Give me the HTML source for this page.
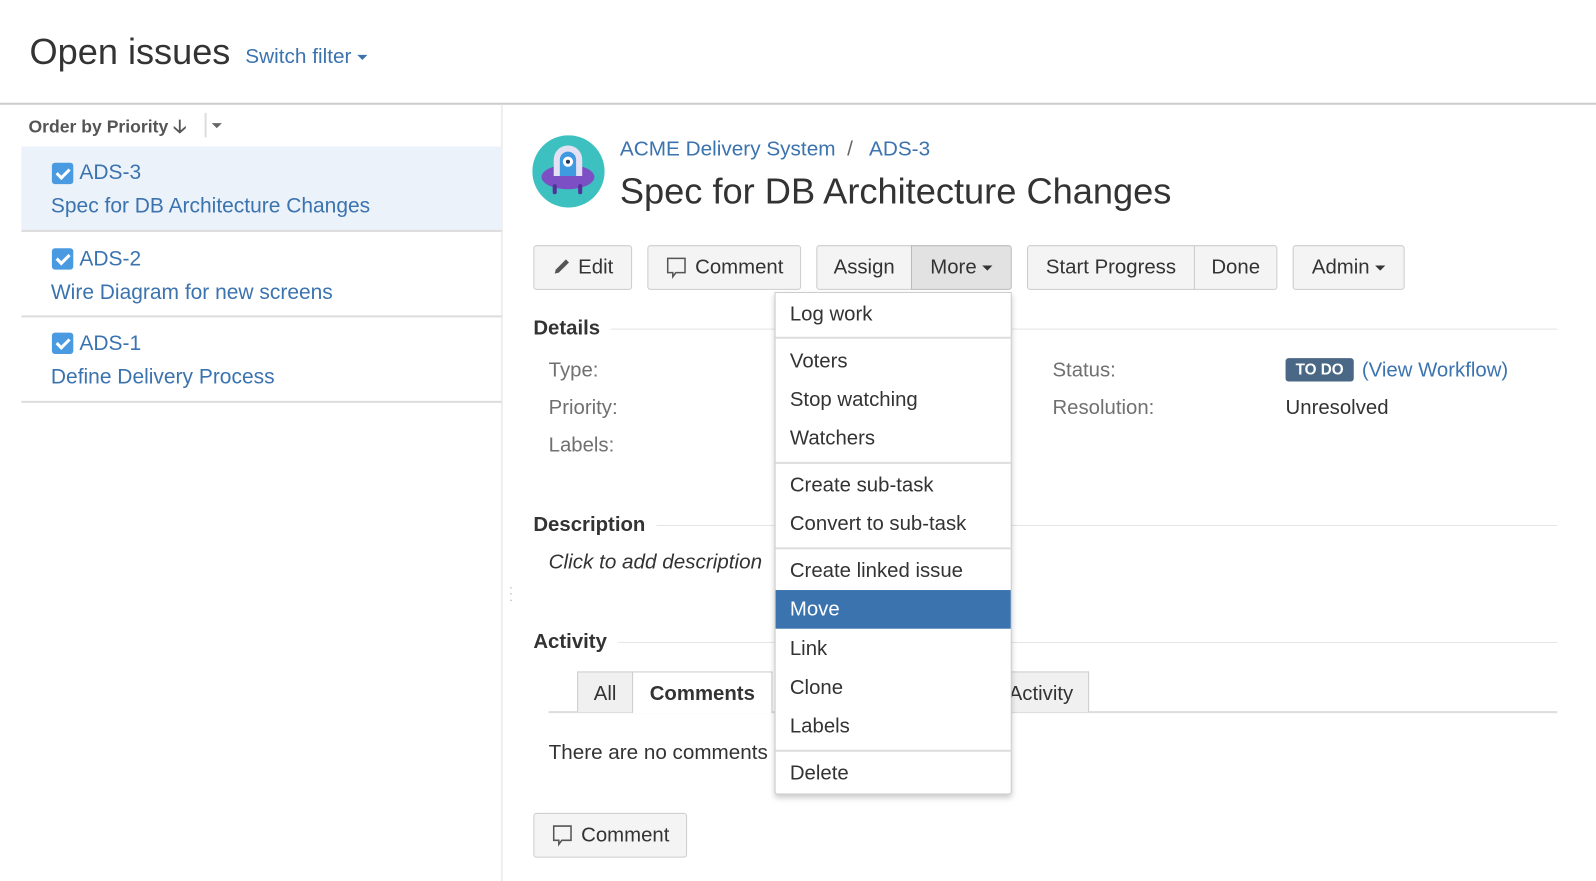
<!DOCTYPE html>
<html><head><meta charset="utf-8"><style>
*{box-sizing:border-box;margin:0;padding:0}
html,body{width:1596px;height:881px;overflow:hidden;background:#fff}
#w{width:1568px;height:866px;position:relative;transform:scale(1.01786,1.01732);transform-origin:0 0;font-family:"Liberation Sans",Arial,sans-serif;color:#333;font-size:20px}
.a{position:absolute;white-space:nowrap}
.blue{color:#3b73af}
.btn{position:absolute;top:241px;height:44px;border:1px solid #ccc;background:#f4f4f4;border-radius:3px;line-height:42px;text-align:center;font-size:20px;color:#333}
.lbl{color:#707070}
.item{position:absolute;left:21px;width:472px;height:84px;border-bottom:2px solid #ddd}
.item .a{font-size:20.6px}
.cb{position:absolute;left:30px;width:21px;height:21px;background:#4a9ae1;border-radius:3px}
.cb:after{content:"";position:absolute;left:7px;top:3px;width:5px;height:10px;border:solid #fff;border-width:0 3px 3px 0;transform:rotate(45deg)}
.dd{position:absolute;left:761px;top:287px;width:233px;height:494px;background:#fff;border:1px solid #ccc;border-radius:0 0 3px 3px;box-shadow:0 3px 6px rgba(0,0,0,.2)}
.di{position:absolute;left:0;width:231px;height:38px;line-height:38px;padding-left:14px;color:#333}
.sep{position:absolute;left:0;width:231px;height:2px;background:#ddd}
h3{position:absolute;font-size:20px;font-weight:bold;color:#333}
.hl{position:absolute;height:1px;background:#e5e5e5}
</style></head><body><div id="w">
<div class="a" style="left:29px;top:31px;font-size:35.5px;color:#333">Open issues</div>
<div class="a blue" style="left:241px;top:45px;font-size:20.4px">Switch filter <span style="display:inline-block;border:5px solid transparent;border-top-color:#3b73af;vertical-align:middle;margin-top:4px"></span></div>
<div style="position:absolute;left:0;top:101px;width:1568px;height:2px;background:#ccc"></div>
<div style="position:absolute;left:492px;top:103px;width:2px;height:763px;background:#eee"></div>
<div class="a" style="left:28px;top:112px;font-size:17.3px;font-weight:bold;color:#555">Order by Priority <span style="font-size:18px">&#129123;</span></div>
<div style="position:absolute;left:201px;top:111px;width:2px;height:24px;background:#ddd"></div>
<div style="position:absolute;left:208px;top:121px;border:5px solid transparent;border-top-color:#666"></div>
<div class="item" style="top:144px;background:#ebf2f9"><div class="cb" style="top:16px"></div><div class="a blue" style="left:57px;top:14px">ADS-3</div><div class="a blue" style="left:29px;top:47px">Spec for DB Architecture Changes</div></div>
<div class="item" style="top:228px"><div class="cb" style="top:16px"></div><div class="a blue" style="left:57px;top:15px">ADS-2</div><div class="a blue" style="left:29px;top:48px">Wire Diagram for new screens</div></div>
<div class="item" style="top:312px"><div class="cb" style="top:15px"></div><div class="a blue" style="left:57px;top:14px">ADS-1</div><div class="a blue" style="left:29px;top:47px">Define Delivery Process</div></div>
<div class="a" style="left:500px;top:574px;color:#aaa;font-size:12px;line-height:6px">·<br>·<br>·</div>
<svg class="a" style="left:523px;top:133px" width="71" height="71" viewBox="0 0 71 71"><circle cx="35.5" cy="35.5" r="35.5" fill="#3dc0c0"/><ellipse cx="35" cy="41" rx="26" ry="12" fill="#7d4fc4"/><rect x="20" y="48" width="4" height="10" rx="2" fill="#55309a"/><rect x="45" y="48" width="4" height="10" rx="2" fill="#55309a"/><path d="M21 40 V24 a14 14 0 0 1 28 0 V40 Z" fill="#e4e0f3"/><path d="M27 40 V24 a8 8 0 0 1 16 0 V40 Z" fill="#3f9ae0"/><circle cx="35" cy="26" r="5" fill="#fff"/><circle cx="35" cy="26" r="2" fill="#253858"/></svg>
<div class="a blue" style="left:609px;top:136px;font-size:20.4px">ACME Delivery System <span style="color:#666">&nbsp;/&nbsp;&nbsp;</span> ADS-3</div>
<div class="a" style="left:609px;top:168px;font-size:35.6px;color:#333">Spec for DB Architecture Changes</div>
<div class="btn" style="left:524px;width:97px"><svg width="20" height="20" viewBox="0 0 20 20" style="vertical-align:-3px"><path d="M3 17 L4 13 L14 3 L17 6 L7 16 Z" fill="#555"/></svg> Edit</div>
<div class="btn" style="left:636px;width:151px"><svg width="24" height="24" viewBox="0 0 24 24" style="vertical-align:-6px"><path d="M3 3 H20 V17 H11 L8 21 V17 H3 Z" fill="none" stroke="#555" stroke-width="1.5"/></svg> Comment</div>
<div class="btn" style="left:802px;width:94px;border-radius:3px 0 0 3px">Assign</div>
<div class="btn" style="left:895px;width:99px;background:#e2e2e2;border-color:#bbb;border-radius:0 3px 3px 0">More <span style="display:inline-block;border:5px solid transparent;border-top-color:#333;vertical-align:middle;margin-top:4px"></span></div>
<div class="btn" style="left:1009px;width:165px;border-radius:3px 0 0 3px">Start Progress</div>
<div class="btn" style="left:1173px;width:82px;border-radius:0 3px 3px 0">Done</div>
<div class="btn" style="left:1270px;width:110px">Admin <span style="display:inline-block;border:5px solid transparent;border-top-color:#333;vertical-align:middle;margin-top:4px"></span></div>
<h3 style="left:524px;top:312px">Details</h3><div class="hl" style="left:600px;top:323px;width:930px"></div>
<div class="a lbl" style="left:539px;top:353px">Type:</div>
<div class="a lbl" style="left:539px;top:390px">Priority:</div>
<div class="a lbl" style="left:539px;top:427px">Labels:</div>
<div class="a lbl" style="left:1034px;top:353px">Status:</div>
<div class="a lbl" style="left:1034px;top:390px">Resolution:</div>
<div class="a" style="left:1263px;top:352px;width:67px;height:23px;background:#4a6785;border-radius:3px;color:#fff;font-size:15px;font-weight:bold;text-align:center;line-height:23px">TO DO</div>
<div class="a blue" style="left:1338px;top:353px">(View Workflow)</div>
<div class="a" style="left:1263px;top:390px">Unresolved</div>
<h3 style="left:524px;top:505px">Description</h3><div class="hl" style="left:645px;top:516px;width:885px"></div>
<div class="a" style="left:539px;top:542px;font-style:italic;font-size:20.3px">Click to add description</div>
<h3 style="left:524px;top:620px">Activity</h3><div class="hl" style="left:607px;top:631px;width:923px"></div>
<div style="position:absolute;left:539px;top:699px;width:991px;height:2px;background:#ddd"></div>
<div class="a" style="left:567px;top:660px;width:55px;height:40px;background:#f0f0f0;border:1px solid #ccc;border-bottom:none;text-align:center;line-height:42px">All</div>
<div class="a" style="left:621px;top:660px;width:138px;height:41px;background:#fff;border:1px solid #ccc;border-bottom:none;text-align:center;line-height:42px;font-weight:bold">Comments</div>
<div class="a" style="left:960px;top:660px;width:110px;height:40px;background:#f0f0f0;border:1px solid #ccc;border-bottom:none;line-height:42px;padding-left:30px">Activity</div>
<div class="a" style="left:539px;top:729px;font-size:20.3px">There are no comments</div>
<div class="btn" style="left:524px;top:799px;width:151px"><svg width="24" height="24" viewBox="0 0 24 24" style="vertical-align:-6px"><path d="M3 3 H20 V17 H11 L8 21 V17 H3 Z" fill="none" stroke="#555" stroke-width="1.5"/></svg> Comment</div>
<div class="dd">
<div class="di" style="top:2px">Log work</div>
<div class="sep" style="top:43px"></div>
<div class="di" style="top:48px">Voters</div>
<div class="di" style="top:86px">Stop watching</div>
<div class="di" style="top:124px">Watchers</div>
<div class="sep" style="top:166px"></div>
<div class="di" style="top:170px">Create sub-task</div>
<div class="di" style="top:208px">Convert to sub-task</div>
<div class="sep" style="top:250px"></div>
<div class="di" style="top:254px">Create linked issue</div>
<div class="di" style="top:292px;background:#3b73af;color:#fff">Move</div>
<div class="di" style="top:331px">Link</div>
<div class="di" style="top:369px">Clone</div>
<div class="di" style="top:407px">Labels</div>
<div class="sep" style="top:449px"></div>
<div class="di" style="top:453px">Delete</div>
</div>
</div></body></html>
